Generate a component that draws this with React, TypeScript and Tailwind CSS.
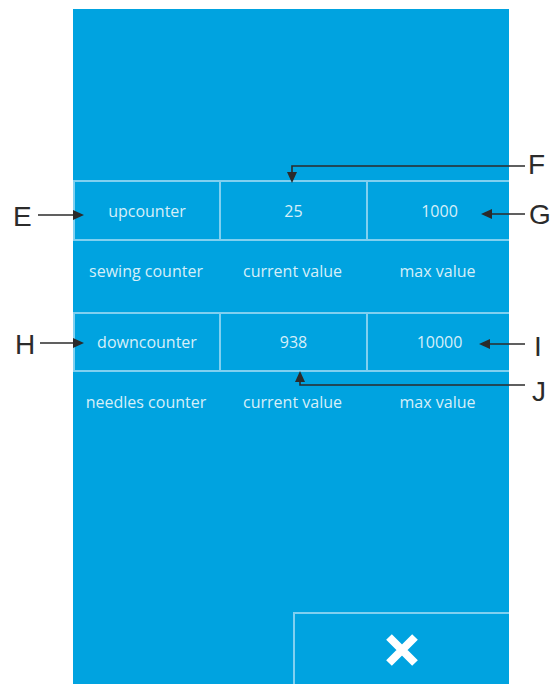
import React from "react";

const lbl = "absolute leading-none text-[28px] text-[#2b2b2b] font-['Liberation_Sans',Arial,sans-serif]";

function Cell({ children, last }: { children: React.ReactNode; last?: boolean }) {
  return (
    <div className={`flex items-center justify-center ${last ? "" : "border-r-2 border-[#80d0f0]"}`}>
      {children}
    </div>
  );
}

export default function App() {
  return (
    <div className="relative w-[559px] h-[684px] bg-white overflow-hidden">
      <div className="ml-[73px] pt-[9px] w-[436px]">
        <div className="h-[675px] bg-[#00a3e0] flex flex-col text-[16px] font-medium text-[#d6eff9] font-['Open_Sans','Noto_Sans',sans-serif]">
          <div className="h-[171px]" />
          <div className="h-[61px] grid grid-cols-[146px_147px_143px] border-y-2 border-l-2 border-[#80d0f0]">
            <Cell>upcounter</Cell>
            <Cell>25</Cell>
            <Cell last>1000</Cell>
          </div>
          <div className="h-[71px] grid grid-cols-[146px_147px_143px] pt-[18px]">
            <div className="text-center">sewing counter</div>
            <div className="text-center">current value</div>
            <div className="text-center">max value</div>
          </div>
          <div className="h-[60px] grid grid-cols-[146px_147px_143px] border-y-2 border-l-2 border-[#80d0f0]">
            <Cell>downcounter</Cell>
            <Cell>938</Cell>
            <Cell last>10000</Cell>
          </div>
          <div className="h-[71px] grid grid-cols-[146px_147px_143px] pt-[18px]">
            <div className="text-center">needles counter</div>
            <div className="text-center">current value</div>
            <div className="text-center">max value</div>
          </div>
          <div className="flex-1" />
          <div className="flex justify-end">
            <div className="w-[216px] h-[72px] border-t-2 border-l-2 border-[#80d0f0] flex items-center justify-center pt-[2px]">
              <svg width="36" height="36" viewBox="0 0 36 36">
                <path d="M5 5 L31 31 M31 5 L5 31" stroke="white" strokeWidth="8" strokeLinecap="butt" />
              </svg>
            </div>
          </div>
        </div>
      </div>

      <svg className="absolute left-0 top-0" width="559" height="684" viewBox="0 0 559 684">
        <g stroke="#2b2b2b" strokeWidth="1.6" fill="none">
          <path d="M38 215 H76" />
          <path d="M525 166 H292 V174" />
          <path d="M525 214 H489" />
          <path d="M40 343 H76" />
          <path d="M525 344 H487" />
          <path d="M525 385 H300 V379" />
        </g>
        <g fill="#2b2b2b">
          <path d="M84 215 L73 210 L73 220 Z" />
          <path d="M292 183 L287 172 L297 172 Z" />
          <path d="M481 214 L492 209 L492 219 Z" />
          <path d="M84 343 L73 338 L73 348 Z" />
          <path d="M479 344 L490 339 L490 349 Z" />
          <path d="M300 371 L295 382 L305 382 Z" />
        </g>
      </svg>
      <span className={`${lbl} left-[13px] top-[203px]`}>E</span>
      <span className={`${lbl} left-[528px] top-[151px]`}>F</span>
      <span className={`${lbl} left-[529px] top-[201px]`}>G</span>
      <span className={`${lbl} left-[15px] top-[331px]`}>H</span>
      <span className={`${lbl} left-[534px] top-[333px]`}>I</span>
      <span className={`${lbl} left-[532px] top-[378px]`}>J</span>
    </div>
  );
}
